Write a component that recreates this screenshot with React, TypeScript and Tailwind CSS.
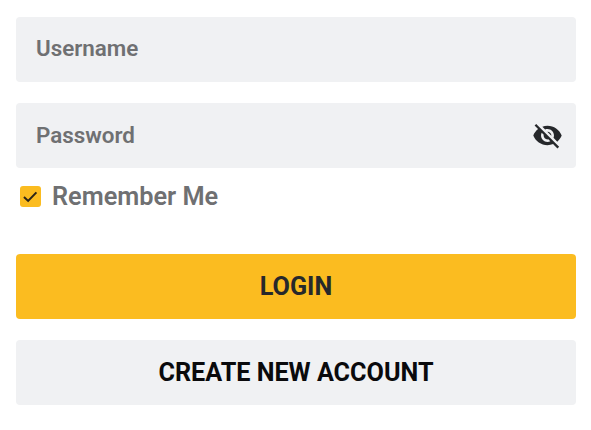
import React from 'react';

const VisibilityOff = () => (
  <svg viewBox="0 0 24 24" className="w-[31px] h-[31px] fill-[#26282b]">
    <path d="M12 7c2.76 0 5 2.24 5 5 0 .65-.13 1.26-.36 1.83l2.92 2.92c1.51-1.26 2.7-2.89 3.43-4.75-1.73-4.39-6-7.5-11-7.5-1.4 0-2.74.25-3.98.7l2.16 2.16C10.74 7.13 11.35 7 12 7zM2 4.27l2.28 2.28.46.46C3.08 8.3 1.78 10.02 1 12c1.73 4.39 6 7.5 11 7.5 1.55 0 3.03-.3 4.38-.84l.42.42L19.73 22 21 20.73 3.27 3 2 4.27zM7.53 9.8l1.55 1.55c-.05.21-.08.43-.08.65 0 1.66 1.34 3 3 3 .22 0 .44-.03.65-.08l1.55 1.55c-.67.33-1.41.53-2.2.53-2.76 0-5-2.24-5-5 0-.79.2-1.53.53-2.2zm4.31-.78l3.15 3.15.02-.16c0-1.66-1.34-3-3-3l-.17.01z" />
  </svg>
);

export default function App() {
  return (
    <div className="w-[591px] h-[430px] bg-white pl-4 pr-[15px] pt-[17px] font-['Roboto',sans-serif]">
      <div className="h-[65px] rounded bg-[#f0f1f3] px-5 pb-0.5 flex items-center text-[22.4px] font-semibold text-[#6f7072]">
        Username
      </div>

      <div className="mt-[21px] h-[65px] rounded bg-[#f0f1f3] pl-5 pr-[13px] flex items-center justify-between text-[22.4px] font-semibold text-[#6f7072]">
        <span>Password</span>
        <VisibilityOff />
      </div>

      <div className="mt-[13px] ml-1 h-[31px] flex items-center gap-[11px]">
        <div className="w-[21px] h-[21px] rounded-[3px] bg-[#fbbc20] flex items-center justify-center">
          <svg viewBox="0 0 16 16" className="w-[19px] h-[19px] fill-none stroke-[#2a2418] stroke-[1.7]">
            <path d="M2.5 8.5l3.5 3.2 7-7.2" />
          </svg>
        </div>
        <span className="text-[25.3px] font-semibold text-[#6f7072]">Remember Me</span>
      </div>

      <button className="mt-[42px] w-full h-[65px] rounded bg-[#fbbc20] text-[25.2px] font-bold text-[#26282b] flex items-center justify-center">
        LOGIN
      </button>

      <button className="mt-[21px] w-full h-[65px] rounded bg-[#f0f1f3] text-[25.2px] font-bold text-[#0a0a0c] flex items-center justify-center">
        CREATE NEW ACCOUNT
      </button>
    </div>
  );
}
